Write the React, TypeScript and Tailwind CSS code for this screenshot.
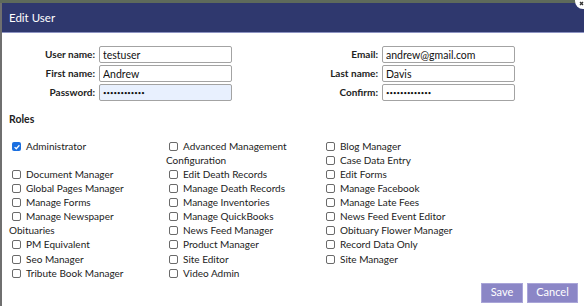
const roles: { name: string; checked?: boolean }[] = [
  { name: 'Administrator', checked: true },
  { name: 'Advanced Management Configuration' },
  { name: 'Blog Manager' },
  { name: 'Case Data Entry' },
  { name: 'Document Manager' },
  { name: 'Edit Death Records' },
  { name: 'Edit Forms' },
  { name: 'Global Pages Manager' },
  { name: 'Manage Death Records' },
  { name: 'Manage Facebook' },
  { name: 'Manage Forms' },
  { name: 'Manage Inventories' },
  { name: 'Manage Late Fees' },
  { name: 'Manage Newspaper Obituaries' },
  { name: 'Manage QuickBooks' },
  { name: 'News Feed Event Editor' },
  { name: 'News Feed Manager' },
  { name: 'Obituary Flower Manager' },
  { name: 'PM Equivalent' },
  { name: 'Product Manager' },
  { name: 'Record Data Only' },
  { name: 'Seo Manager' },
  { name: 'Site Editor' },
  { name: 'Site Manager' },
  { name: 'Tribute Book Manager' },
  { name: 'Video Admin' },
]

function Field({ label, value, password, autofill }: { label: string; value: string; password?: boolean; autofill?: boolean }) {
  return (
    <div className="flex items-center">
      <label className="w-[90px] pr-[4px] text-right font-bold text-[#222]">{label}</label>
      <input
        readOnly
        type={password ? 'password' : 'text'}
        value={value}
        className={
          'h-[17px] w-[133px] rounded-[2px] border border-[#a3a3a3] px-[3px] text-[#111] outline-none ' +
          (password ? 'text-[6px] ' : 'text-[10.5px] ') +
          (autofill ? 'bg-[#e8f0fe]' : 'bg-white')
        }
      />
    </div>
  )
}

function RoleBox({ checked }: { checked?: boolean }) {
  return checked ? (
    <span className="relative top-[1px] ml-[3px] mr-[5px] inline-flex h-[9px] w-[9px] items-center justify-center rounded-[2px] bg-[#1a6fe0] align-baseline">
      <svg viewBox="0 0 10 10" className="h-[8px] w-[8px]">
        <path d="M2 5.2 L4.1 7.2 L8 2.8" fill="none" stroke="white" strokeWidth="1.6" />
      </svg>
    </span>
  ) : (
    <span className="relative top-[1px] ml-[3px] mr-[5px] inline-block h-[9px] w-[9px] rounded-[2px] border border-[#6a6a6a] bg-white align-baseline" />
  )
}

export default function App() {
  return (
    <div className="relative h-[306px] w-[584px] overflow-hidden bg-[#5e6a5b] font-['Lato',sans-serif] text-[10px] text-[#222]">
      <div className="mt-[3px] h-[303px] border-l-2 border-[#6f6f6f] bg-white">
        {/* Title bar */}
        <div className="flex h-[30px] items-center border-b border-[#8d93c2] bg-[#2f386e] pl-[7px] text-[11.5px] text-white">
          Edit User
        </div>

        {/* Account fields */}
        <div className="mt-[13px] flex pl-[7px]">
          <div className="flex flex-col gap-[2px]">
            <Field label="User name:" value="testuser" />
            <Field label="First name:" value="Andrew" />
            <Field label="Password:" value="password1234" password autofill />
          </div>
          <div className="ml-[60px] flex flex-col gap-[2px]">
            <Field label="Email:" value="andrew@gmail.com" />
            <Field label="Last name:" value="Davis" />
            <Field label="Confirm:" value="password12345" password />
          </div>
        </div>

        {/* Roles */}
        <div className="mt-[11px] pl-[7px] text-[10.5px] font-bold">Roles</div>
        <div className="mt-[11px] pl-[7px] leading-[14.1px] after:block after:clear-both after:content-['']">
          {roles.map((r) => (
            <div key={r.name} className="float-left mr-[9px] w-[148px]">
              <RoleBox checked={r.checked} />
              {r.name}
            </div>
          ))}
        </div>

        {/* Footer */}
        <div className="mt-[3px] flex justify-end gap-[4px] pr-[6px]">
          <button className="h-[20px] w-[42px] border border-[#a9a5d8] bg-[#8b86c6] text-[11px] text-white">Save</button>
          <button className="h-[20px] w-[51px] border border-[#a9a5d8] bg-[#8b86c6] text-[11px] text-white">Cancel</button>
        </div>
      </div>

      {/* Close button peeking in at the corner */}
      <svg viewBox="0 0 16 16" className="absolute left-[575px] top-[-7px] h-[16px] w-[16px]">
        <circle cx="8" cy="8" r="8" fill="white" />
        <path d="M5 9 L8 12 M8 9 L5 12" stroke="#333" strokeWidth="1.4" />
      </svg>
    </div>
  )
}
